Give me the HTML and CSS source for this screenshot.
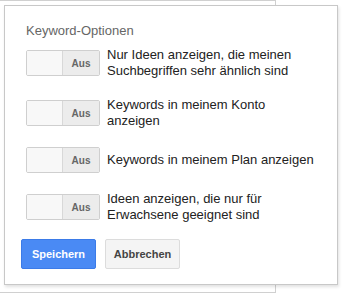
FILE: index.html
```html
<!DOCTYPE html>
<html lang="de">
<head>
<meta charset="utf-8">
<link rel="stylesheet" href="styles.css">
</head>
<body>
<div class="bg-top"></div>
<div class="card">
  <div class="title">Keyword-Optionen</div>
  <div class="options">
    <div class="row">
      <div class="toggle"><span class="knob"></span><span class="state">Aus</span></div>
      <div class="label">Nur Ideen anzeigen, die meinen Suchbegriffen sehr ähnlich sind</div>
    </div>
    <div class="row">
      <div class="toggle"><span class="knob"></span><span class="state">Aus</span></div>
      <div class="label">Keywords in meinem Konto anzeigen</div>
    </div>
    <div class="row">
      <div class="toggle"><span class="knob"></span><span class="state">Aus</span></div>
      <div class="label">Keywords in meinem Plan anzeigen</div>
    </div>
    <div class="row">
      <div class="toggle"><span class="knob"></span><span class="state">Aus</span></div>
      <div class="label">Ideen anzeigen, die nur für Erwachsene geeignet sind</div>
    </div>
  </div>
  <div class="actions">
    <button class="btn primary">Speichern</button>
    <button class="btn">Abbrechen</button>
  </div>
</div>
<div class="bg-bottom"></div>
</body>
</html>
```
FILE: styles.css
```css
html, body {
  margin: 0;
  padding: 0;
  background: #fff;
  font-family: "Liberation Sans", Arial, sans-serif;
}
.bg-top {
  width: 275px;
  height: 4px;
  border-top: 1px solid #d0d0d0;
  border-right: 1px solid #d0d0d0;
}
.bg-bottom {
  width: 275px;
  height: 7px;
  border-bottom: 1px solid #d0d0d0;
  border-right: 1px solid #d0d0d0;
}
.card {
  position: relative;
  z-index: 1;
  box-sizing: border-box;
  margin-left: 4px;
  width: 334px;
  height: 280px;
  background: #fff;
  border: 1px solid #c8c8c8;
  box-shadow: 1px 2px 3px rgba(0,0,0,0.12);
  padding: 17px 16px 0 16px;
}
.title {
  font-size: 13px;
  line-height: 16px;
  color: #666;
  padding-left: 5px;
}
.options {
  display: flex;
  flex-direction: column;
  gap: 18px;
  margin-top: 8px;
  padding-left: 5px;
}
.row {
  display: flex;
  align-items: center;
  gap: 7px;
}
.toggle {
  box-sizing: border-box;
  flex: none;
  display: flex;
  width: 74px;
  height: 26px;
  border: 1px solid #cfcfcf;
  border-radius: 2px;
  overflow: hidden;
}
.knob {
  width: 35px;
  background: #f8f8f8;
  border-right: 1px solid #d8d8d8;
}
.state {
  flex: 1;
  display: flex;
  align-items: center;
  justify-content: center;
  background: #ececec;
  font-size: 10px;
  font-weight: bold;
  color: #666;
}
.label {
  width: 210px;
  font-size: 13px;
  line-height: 16px;
  color: #222;
}
.actions {
  display: flex;
  gap: 9px;
  margin-top: 16px;
}
.btn {
  box-sizing: border-box;
  width: 75px;
  height: 30px;
  padding: 0;
  border: 1px solid #dcdcdc;
  border-radius: 2px;
  background: #f4f4f4;
  color: #444;
  font-family: "Liberation Sans", Arial, sans-serif;
  font-size: 11px;
  font-weight: bold;
}
.btn.primary {
  background: #4a8af4;
  border-color: #3b7be8;
  color: #fff;
}
```
